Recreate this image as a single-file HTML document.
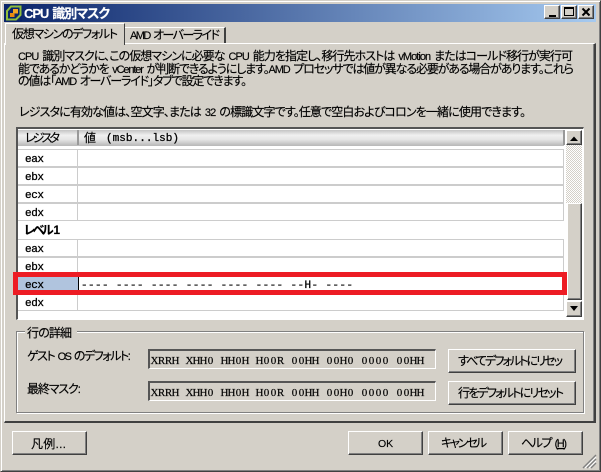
<!DOCTYPE html>
<html lang="ja"><head><meta charset="utf-8"><style>
html,body{margin:0;padding:0;background:#d4d0c8}
body{width:601px;height:472px;position:relative;overflow:hidden}
div{position:absolute;box-sizing:border-box}
.btn{background:#d4d0c8;border-top:1px solid #fff;border-left:1px solid #fff;border-right:1px solid #404040;border-bottom:1px solid #404040;box-shadow:inset -1px -1px 0 #808080}
.sunk{background:#d4d0c8;border-top:2px solid #555;border-left:2px solid #555;border-right:1px solid #fff;border-bottom:1px solid #fff}
.l{background:#ccc}
svg{position:absolute;left:0;top:0}
text{font-family:"Liberation Sans","Noto Sans CJK JP",sans-serif;font-size:12px;fill:#000;stroke:#000;stroke-width:.15;font-feature-settings:"palt";word-spacing:1.5px}
tspan.a{font-size:11px}
.m{font-family:"Liberation Mono",monospace;font-size:11px;stroke-width:.3;font-feature-settings:normal;word-spacing:0}
.s{font-family:"Liberation Serif",serif;font-size:11px;stroke-width:.2;text-anchor:middle;font-feature-settings:normal;word-spacing:0}
</style></head><body>
<div style="left:0;top:0;width:601px;height:472px;border-top:1px solid #d4d0c8;border-left:1px solid #d4d0c8;border-right:1px solid #404040;border-bottom:1px solid #404040;box-shadow:inset 1px 1px 0 #fff,inset -1px -1px 0 #808080"></div>
<div style="left:4px;top:4px;width:592px;height:18px;background:linear-gradient(90deg,#0a246a,#a6caf0)"></div>
<div class="btn" style="left:544px;top:5px;width:16px;height:14px"></div>
<div style="left:549px;top:15px;width:7px;height:2px;background:#000"></div>
<div class="btn" style="left:561px;top:5px;width:16px;height:14px"></div>
<div style="left:564px;top:7px;width:10px;height:9px;border:1px solid #000;border-top-width:2px"></div>
<div class="btn" style="left:578px;top:5px;width:16px;height:14px"></div>

<!-- tab pane -->
<div style="left:4px;top:43px;width:592px;height:380px;border-top:1px solid #fff;border-left:1px solid #fff;border-right:2px solid #404040;border-bottom:2px solid #404040;box-shadow:inset -1px 0 0 #808080"></div>
<div style="left:5px;top:23px;width:120px;height:22px;background:#d4d0c8;border-top:1px solid #fff;border-left:1px solid #fff;border-right:1px solid #404040"></div>
<div style="left:125px;top:27px;width:101px;height:16px;background:#d4d0c8;border-top:1px solid #fff;border-right:2px solid #404040"></div>

<!-- table -->
<div style="left:16px;top:127px;width:568px;height:193px;background:#fff;border-top:2px solid #555;border-left:2px solid #555;border-right:1px solid #fff;border-bottom:1px solid #fff"></div>
<div style="left:18px;top:130px;width:546px;height:15px;background:linear-gradient(#c4c4c4,#f0f0f0 35%,#e4e4e4 65%,#bdbdbd)"></div>
<div style="left:18px;top:145px;width:546px;height:1px;background:#bbb"></div>
<div style="left:77px;top:130px;width:2px;height:15px;background:#999"></div>
<div style="left:563px;top:130px;width:2px;height:15px;background:#999"></div>

<div class="l" style="left:18px;top:149px;width:546px;height:1px"></div>
<div class="l" style="left:18px;top:166px;width:546px;height:2px"></div>
<div class="l" style="left:18px;top:184px;width:546px;height:2px"></div>
<div class="l" style="left:18px;top:202px;width:546px;height:2px"></div>
<div class="l" style="left:18px;top:220px;width:546px;height:1px"></div>
<div class="l" style="left:18px;top:239px;width:546px;height:1px"></div>
<div class="l" style="left:18px;top:256px;width:546px;height:2px"></div>
<div class="l" style="left:18px;top:274px;width:546px;height:2px"></div>
<div class="l" style="left:18px;top:292px;width:546px;height:2px"></div>
<div class="l" style="left:18px;top:310px;width:546px;height:1px"></div>
<div class="l" style="left:77px;top:149px;width:1px;height:72px"></div>
<div class="l" style="left:77px;top:239px;width:1px;height:72px"></div>
<div class="l" style="left:563px;top:149px;width:1px;height:72px"></div>
<div class="l" style="left:563px;top:239px;width:1px;height:72px"></div>
<div style="left:18px;top:276px;width:60px;height:16px;background:#b0c4de"></div>
<div style="left:78px;top:276px;width:1px;height:16px;background:#000"></div>

<!-- scrollbar -->
<div style="left:566px;top:145px;width:16px;height:58px;background:repeating-conic-gradient(#d4d0c8 0 25%,#fff 0 50%) 0 0/2px 2px"></div>
<div style="left:566px;top:203px;width:16px;height:97px;background:#fff"></div>
<div class="btn" style="left:566px;top:130px;width:16px;height:15px"></div>
<div class="btn" style="left:567px;top:203px;width:15px;height:97px"></div>
<div class="btn" style="left:566px;top:301px;width:16px;height:16px"></div>

<!-- red highlight -->
<div style="left:13px;top:272px;width:554px;height:23px;border:5px solid #ed1c24"></div>

<!-- group -->
<div style="left:16px;top:331px;width:568px;height:82px;border:1px solid #808080;box-shadow:1px 1px 0 #fff,inset 1px 1px 0 #fff"></div>
<div style="left:25px;top:326px;width:52px;height:12px;background:#d4d0c8"></div>
<div class="sunk" style="left:148px;top:349px;width:288px;height:20px"></div>
<div class="sunk" style="left:148px;top:381px;width:288px;height:20px"></div>
<div class="btn" style="left:448px;top:349px;width:128px;height:24px"></div>
<div class="btn" style="left:448px;top:381px;width:128px;height:24px"></div>
<div class="btn" style="left:12px;top:431px;width:75px;height:24px"></div>
<div class="btn" style="left:348px;top:431px;width:75px;height:24px"></div>
<div class="btn" style="left:428px;top:431px;width:75px;height:24px"></div>
<div class="btn" style="left:508px;top:431px;width:75px;height:24px"></div>

<svg width="601" height="472" viewBox="0 0 601 472">
<!-- app icon -->
<rect x="5" y="5" width="17" height="17" rx="2" fill="#0a246a"/>
<path d="M11 6.5 H20.5 V15 L16 19.5 H7 V11 Z" fill="none" stroke="#8fbe3c" stroke-width="2"/>
<rect x="13" y="9" width="5" height="4.5" fill="#f5a623"/>
<rect x="10" y="13" width="4.5" height="4" fill="#e88a10"/>
<!-- caption glyphs -->
<path d="M582.5 8.5 L589.5 15.5 M589.5 8.5 L582.5 15.5" stroke="#000" stroke-width="2" fill="none"/>
<!-- scroll arrows -->
<path d="M570 141 H578 L574 136.5 Z" fill="#000"/>
<path d="M570 306 H578 L574 311 Z" fill="#000"/>
<!-- grip -->
<path d="M583 468 L596 455 M587 468 L596 459 M591 468 L596 463" stroke="#808080" stroke-width="1.4" fill="none"/>
<path d="M585 468 L596 457 M589 468 L596 461" stroke="#fff" stroke-width="1" fill="none"/>

<text x="24" y="18" textLength="86" style="fill:#fff;stroke:#fff;font-weight:bold;font-size:13px">CPU 識別マスク</text>
<text x="12" y="38" textLength="106">仮想マシンのデフォルト</text>
<text x="130" y="39" textLength="90"><tspan class="a">AMD</tspan> オーバーライド</text>

<text x="18" y="60" textLength="555"><tspan class="a">CPU</tspan> 識別マスクに、この仮想マシンに必要な <tspan class="a">CPU</tspan> 能力を指定し、移行先ホストは <tspan class="a">vMotion</tspan> またはコールド移行が実行可</text>
<text x="18" y="73" textLength="556">能であるかどうかを <tspan class="a">vCenter</tspan> が判断できるようにします。<tspan class="a">AMD</tspan> プロセッサでは値が異なる必要がある場合があります。これら</text>
<text x="18" y="85" textLength="229">の値は「<tspan class="a">AMD</tspan> オーバーライド」タブで設定できます。</text>
<text x="19" y="116" textLength="507">レジスタに有効な値は、空文字、または <tspan class="a">32</tspan> の標識文字です。任意で空白およびコロンを一緒に使用できます。</text>

<text x="25" y="142" textLength="35">レジスタ</text>
<text x="84" y="142" style="font-size:12px">値</text>
<text class="m" x="106" y="141" textLength="73">(msb...lsb)</text>

<text class="m" x="25" y="162" textLength="19">eax</text>
<text class="m" x="25" y="180" textLength="19">ebx</text>
<text class="m" x="25" y="198" textLength="19">ecx</text>
<text class="m" x="25" y="216" textLength="19">edx</text>
<text x="24" y="234" textLength="36" style="font-weight:bold">レベル 1</text>
<text class="m" x="25" y="252" textLength="19">eax</text>
<text class="m" x="25" y="270" textLength="19">ebx</text>
<text class="m" x="25" y="288" textLength="19">ecx</text>
<text class="m" x="25" y="306" textLength="19">edx</text>
<text class="m" x="81" y="288" textLength="272">---- ---- ---- ---- ---- ---- --H- ----</text>

<text x="27" y="337" textLength="45">行の詳細</text>
<text x="27" y="360" textLength="104">ゲスト <tspan class="a">OS</tspan> のデフォルト:</text>
<text x="27" y="393" textLength="54">最終マスク:</text>
<text class="s" y="364" x="154.5 161.5 168.5 175.5 182.5 189.5 196.5 203.5 210.5 217.5 224.5 231.5 238.5 245.5 252.5 259.5 266.5 273.5 280.5 287.5 294.5 301.5 308.5 315.5 322.5 329.5 336.5 343.5 350.5 357.5 364.5 371.5 378.5 385.5 392.5 399.5 406.5 413.5 420.5">XRRH XHH0 HH0H H00R 00HH 00H0 0000 00HH</text>
<text class="s" y="396" x="154.5 161.5 168.5 175.5 182.5 189.5 196.5 203.5 210.5 217.5 224.5 231.5 238.5 245.5 252.5 259.5 266.5 273.5 280.5 287.5 294.5 301.5 308.5 315.5 322.5 329.5 336.5 343.5 350.5 357.5 364.5 371.5 378.5 385.5 392.5 399.5 406.5 413.5 420.5">XRRH XHH0 HH0H H00R 00HH 00H0 0000 00HH</text>
<text x="458" y="365" textLength="105">すべてデフォルトにリセッ</text>
<text x="458" y="397" textLength="106">行をデフォルトにリセット</text>
<text x="31" y="448" textLength="35">凡例...</text>
<text x="378" y="447" style="font-size:10.5px">OK</text>
<text x="441" y="447" textLength="46">キャンセル</text>
<text x="521" y="447" textLength="46">ヘルプ <tspan class="a">(<tspan text-decoration="underline">H</tspan>)</tspan></text>
</svg>
</body></html>
